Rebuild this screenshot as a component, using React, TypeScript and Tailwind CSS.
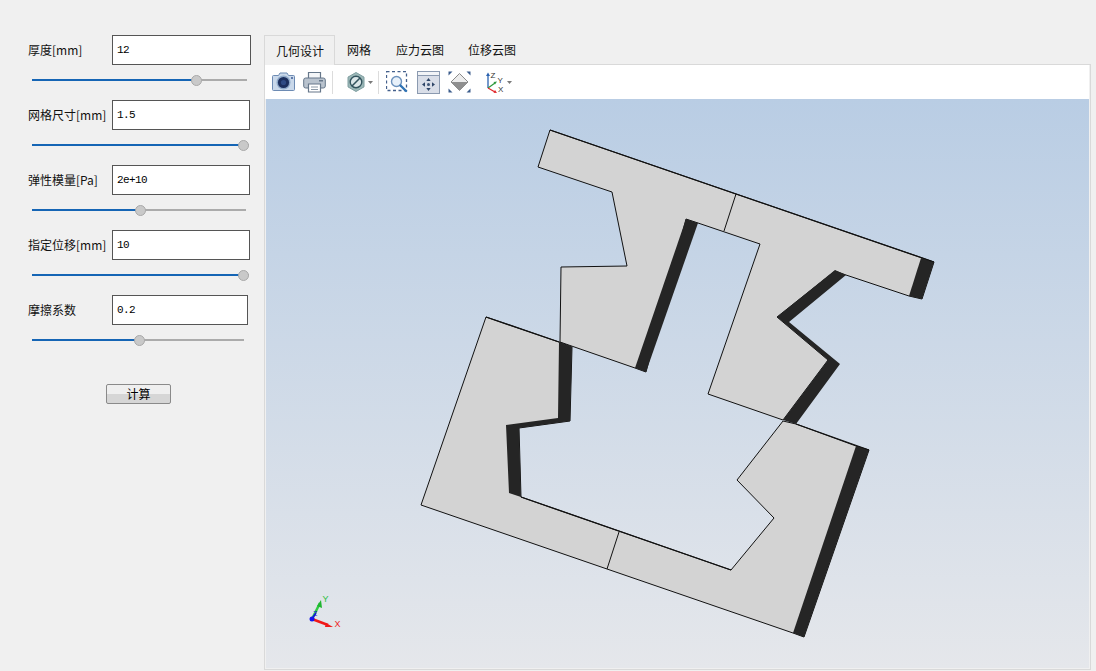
import React from "react";

const fields = [
  { label: "厚度[mm]", value: "12", inputWidth: "w-[139px]", trackWidth: 215, thumb: 165 },
  { label: "网格尺寸[mm]", value: "1.5", inputWidth: "w-[138px]", trackWidth: 217, thumb: 212 },
  { label: "弹性模量[Pa]", value: "2e+10", inputWidth: "w-[138px]", trackWidth: 214, thumb: 109 },
  { label: "指定位移[mm]", value: "10", inputWidth: "w-[138px]", trackWidth: 217, thumb: 212 },
  { label: "摩擦系数", value: "0.2", inputWidth: "w-[136px]", trackWidth: 212, thumb: 108 },
];

const tabs = ["几何设计", "网格", "应力云图", "位移云图"];

const Caret = ({ className }: { className: string }) => (
  <svg viewBox="0 0 5 3" className={`h-[3px] w-[5px] ${className}`}>
    <path d="M0 0h5L2.5 3z" fill="#7a7a7a" />
  </svg>
);

const Separator = ({ className }: { className: string }) => (
  <div className={`h-[23px] w-px bg-[#dcdcdc] ${className}`} />
);

const CameraIcon = () => (
  <svg viewBox="0 0 23 20" className="ml-[7px] h-[20px] w-[23px]">
    <path d="M1.5 3.5h5l1.5-2.5h7l1.5 2.5h5a1 1 0 0 1 1 1v13a1 1 0 0 1-1 1h-20a1 1 0 0 1-1-1v-13a1 1 0 0 1 1-1z" fill="#c9d8ea" stroke="#6d8bb3" />
    <circle cx="11.5" cy="10.5" r="7" fill="#8fa9c9" />
    <circle cx="11.5" cy="10.5" r="5.6" fill="#1c2f5e" />
    <circle cx="11.5" cy="10.5" r="2.6" fill="#2f4a84" />
    <circle cx="20" cy="6" r="1" fill="#3e5c94" />
  </svg>
);

const PrinterIcon = () => (
  <svg viewBox="0 0 23 22" className="ml-[8px] h-[22px] w-[23px]">
    <path d="M5.5 7V1.5h12V7" fill="#f4f6f8" stroke="#66778a" strokeWidth="1.2" />
    <rect x="0.7" y="7" width="21.6" height="10" rx="2" fill="#b9c3ce" stroke="#66778a" />
    <rect x="16" y="9" width="4" height="1.5" fill="#66778a" />
    <path d="M5.5 13h12v8h-12z" fill="#fff" stroke="#66778a" strokeWidth="1.2" />
    <path d="M8 16h7M8 18.5h7" stroke="#8d9aa8" />
  </svg>
);

const HexIcon = () => (
  <svg viewBox="0 0 18 20" className="ml-[14px] h-[20px] w-[18px]">
    <path d="M9 .5l8 4.6v9.8l-8 4.6-8-4.6V5.100z" fill="#9cb8b8" stroke="#7f9ea0" />
    <circle cx="9" cy="10" r="5.800" fill="#dbe6e8" stroke="#33545e" strokeWidth="1.400" />
    <path d="M5 14l8-8" stroke="#33545e" strokeWidth="1.600" />
  </svg>
);

const ZoomBoxIcon = () => (
  <svg viewBox="0 0 22 22" className="ml-[7px] h-[22px] w-[22px]">
    <rect x="0.500" y="0.500" width="20" height="19" fill="none" stroke="#44608c" strokeWidth="1.300" strokeDasharray="3 2.500" />
    <circle cx="10.500" cy="10.500" r="5" fill="#e8f1fa" stroke="#6d92bd" strokeWidth="1.400" />
    <path d="M14.500 14.500l5.500 5.500" stroke="#2f73b5" strokeWidth="2.400" strokeLinecap="round" />
  </svg>
);

const FrameIcon = () => (
  <svg viewBox="0 0 23 23" className="ml-[9px] h-[23px] w-[23px]">
    <rect x="0.500" y="0.500" width="22" height="22" fill="#d9dee8" stroke="#8b9ab0" />
    <rect x="1" y="1" width="21" height="3" fill="#f2f4f7" />
    <path d="M1 4.500h21" stroke="#8b9ab0" />
    <circle cx="11.500" cy="13.500" r="1.500" fill="#3d5475" />
    <path d="M11.500 7l2.200 3h-4.400zM11.500 20l2.200-3h-4.400zM5 13.500l3-2.200v4.400zM18 13.500l-3-2.200v4.400z" fill="#2f4668" />
  </svg>
);

const DiamondIcon = () => (
  <svg viewBox="0 0 23 22" className="ml-[8px] h-[22px] w-[23px]">
    <path d="M11.500 2.500l8.500 8.500-8.500 8.500-8.500-8.500z" fill="#ececec" stroke="#8a8a8a" />
    <path d="M3 11l8.500 8.500 8.500-8.500z" fill="#8f8f8f" />
    <path d="M.5.500h4l-4 4zM22.500.500h-4l4 4zM.5 21.500h4l-4-4zM22.500 21.500h-4l4-4z" fill="#3c5d8c" />
  </svg>
);

const AxesIcon = () => (
  <svg viewBox="0 0 20 22" className="ml-[15px] h-[22px] w-[20px]">
    <path d="M2 17V4" stroke="#2a62b0" strokeWidth="1.300" />
    <path d="M2 1.500l2 3.500h-4z" fill="#2a62b0" />
    <path d="M2 17l7-5" stroke="#2f9a3c" strokeWidth="1.300" />
    <path d="M11 10.500l-3.500.5 1.500 2.500z" fill="#2f9a3c" />
    <path d="M2 17l7 4" stroke="#e0262a" strokeWidth="1.300" />
    <path d="M11 22l-3.500-.3 1.500-2.700z" fill="#e0262a" />
    <text x="4.500" y="7" fontSize="8" fontFamily="Liberation Sans" fill="#333">Z</text>
    <text x="11.500" y="12" fontSize="8" fontFamily="Liberation Sans" fill="#333">Y</text>
    <text x="12" y="21" fontSize="8" fontFamily="Liberation Sans" fill="#333">X</text>
  </svg>
);

const upperShape =
  "550,130 934,262 922,299 909,296 846,275 835,271 777,317 828,360 783,420 708,394 760,244 698,223 686,219 646,372 635,368 560,342 561,267 627,266 612,192 538,167";
const lowerShape =
  "486,317 559,342 572,347 570,421 519,428 521,497 731,570 774,518 737,480 783,421 796,424 856,446 869,450 804,637 793,633 607,569 421,505";

const darkBands = [
  "921,258 934,262 922,299 909,296",
  "835,270 846,275 789,322 840,364 796,424 783,420 828,360 777,317",
  "686,219 698,223 646,372 635,368",
  "559,342 572,347 570,421 519,428 521,497 509,493 506,425 558,418",
  "856,446 869,450 804,637 793,633",
];

const Scene = () => (
  <svg viewBox="266 99 823 569" className="block h-full w-full">
    <polygon points={upperShape} fill="#d3d3d3" stroke="#111" strokeWidth="1" />
    <polygon points={lowerShape} fill="#d3d3d3" stroke="#111" strokeWidth="1" />
    {darkBands.map((points) => (
      <polygon key={points} points={points} fill="#252525" />
    ))}
    <path d="M550 130L934 262M486 317L559 342M796 424L869 450M521 497L731 570" stroke="#111" strokeWidth="1.300" fill="none" />
    <path d="M736 194L724 231M619 532L607 569" stroke="#111" strokeWidth="1" fill="none" />
    {/* orientation triad */}
    <path d="M312 619L320 603" stroke="#2ecc40" strokeWidth="2.500" />
    <path d="M321 600l1 8-5-2z" fill="#1fb52f" />
    <path d="M312 619L328 625" stroke="#f01818" strokeWidth="2.500" />
    <path d="M333 627l-7-4-1 4z" fill="#f01818" />
    <path d="M312 619l4-6" stroke="#1515e0" strokeWidth="1.500" />
    <circle cx="312" cy="619" r="2.500" fill="#1414ee" />
    <text x="322.500" y="602" fontSize="9" fontFamily="Liberation Sans" fill="#2fbf3f">Y</text>
    <text x="334.500" y="627" fontSize="9" fontFamily="Liberation Sans" fill="#ee2222">X</text>
    <text x="313" y="616" fontSize="7" fontFamily="Liberation Sans" fill="#1414cc">Z</text>
  </svg>
);

export default function App() {
  return (
    <div className="flex h-screen w-full overflow-hidden bg-[#f0f0f0] font-['Noto_Sans_CJK_SC','Liberation_Sans',sans-serif] text-[12px] text-[#111]">
      <div className="w-[264px] shrink-0 pt-[35px]">
        {fields.map((field) => (
          <div key={field.label} className="h-[65px]">
            <div className="flex h-[30px] items-center pl-[28px]">
              <span className="w-[84px] whitespace-nowrap">{field.label}</span>
              <div
                className={`flex h-[30px] items-center border border-[#555] bg-white pl-[4px] font-['Liberation_Mono',monospace] text-[11px] tracking-[-0.6px] text-black ${field.inputWidth}`}
              >
                {field.value}
              </div>
            </div>
            <div
              className="relative ml-[32px] mt-[14px] h-[2px] bg-[#ababab]"
              style={{ width: field.trackWidth }}
            >
              <div className="h-[2px] bg-[#1565b5]" style={{ width: field.thumb }} />
              <div
                className="absolute top-[-4px] h-[11px] w-[11px] rounded-full border border-[#a9a9a9] bg-[#c9c9c9]"
                style={{ left: field.thumb - 6 }}
              />
            </div>
          </div>
        ))}
        <button className="ml-[106px] mt-[24px] flex h-[20px] w-[65px] items-center justify-center rounded-[2px] border border-[#8a8a8a] bg-[linear-gradient(#efefef_50%,#d6d6d6_50%)] text-[12px] text-black">
          计算
        </button>
      </div>

      <div className="flex min-w-0 flex-1 flex-col pb-px pr-[5px] pt-[35px]">
        <div className="flex h-[29px]">
          {tabs.map((tab, i) => (
            <div
              key={tab}
              className={
                i === 0
                  ? "z-10 -mb-px flex items-center border border-b-0 border-[#d9d9d9] bg-[#f0f0f0] pl-[11px] pr-[10px]"
                  : i === 1
                    ? "flex items-center pl-3 pr-[13px]"
                    : "flex items-center px-3"
              }
            >
              {tab}
            </div>
          ))}
        </div>
        <div className="flex min-h-0 flex-1 flex-col border border-[#d9d9d9] pb-px pr-px">
          <div className="flex h-[34px] shrink-0 items-center bg-white">
            <CameraIcon />
            <PrinterIcon />
            <Separator className="ml-[6px]" />
            <HexIcon />
            <Caret className="ml-[3px]" />
            <Separator className="ml-[5px]" />
            <ZoomBoxIcon />
            <FrameIcon />
            <DiamondIcon />
            <AxesIcon />
            <Caret className="ml-px" />
          </div>
          <div className="ml-px min-h-0 flex-1 bg-[linear-gradient(#b9cde4,#e5e7eb)]">
            <Scene />
          </div>
        </div>
      </div>
    </div>
  );
}
